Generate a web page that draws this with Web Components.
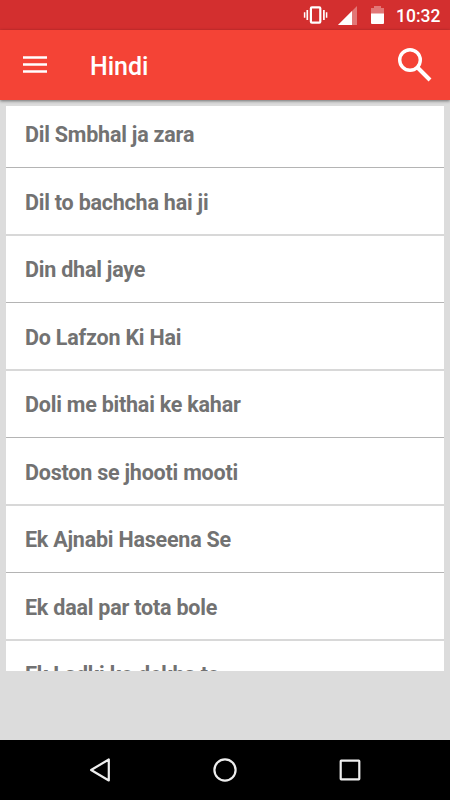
<!DOCTYPE html>
<html lang="en">
<head>
<meta charset="UTF-8">
<title>Hindi</title>
<style>
    html, body {
        margin: 0;
        height: 100%;
    }
    body {
        font-family: Roboto, "Liberation Sans", sans-serif;
        background: #dcdcdc;
        overflow: hidden;
    }
</style>
</head>
<body>
<song-app></song-app>

<script>
class StatusBar extends HTMLElement {
    constructor() {
        super();
        this.attachShadow({ mode: 'open' });
        this.shadowRoot.innerHTML = `
            <style>
                :host {
                    display: flex;
                    justify-content: flex-end;
                    align-items: center;
                    height: 30px;
                    padding-right: 9px;
                    box-sizing: border-box;
                    background: #d32f2f;
                    color: #fff;
                }
                svg { display: block; flex: none; }
                .time {
                    width: 45px;
                    margin-left: 1px;
                    font-size: 17.5px;
                    font-weight: 500;
                    line-height: 30px;
                    padding-top: 2px;
                    white-space: nowrap;
                }
            </style>
            <svg width="92" height="30" viewBox="0 0 92 30">
                <g fill="none" stroke="#fff">
                    <rect x="7.900" y="7.300" width="9.400" height="15.400" rx="1" stroke-width="2.200"/>
                    <path d="M4.300 10v10M20.900 10v10" stroke-width="1.700"/>
                    <path d="M1.600 12.200v5.600M23.600 12.200v5.600" stroke-width="1.500"/>
                </g>
                <path d="M54 6v19H35z" fill="#fff" opacity=".35"/>
                <path d="M49 11v14H35z" fill="#fff"/>
                <path d="M68 8h3V6h7v2h3v6H68z" fill="#fff" opacity=".35"/>
                <path d="M68 13.500h13V23q0 1-1 1h-11q-1 0-1-1z" fill="#fff"/>
            </svg>
            <div class="time"><slot></slot></div>
        `;
    }
}

class ToolBar extends HTMLElement {
    constructor() {
        super();
        this.attachShadow({ mode: 'open' });
        this.shadowRoot.innerHTML = `
            <style>
                :host {
                    display: flex;
                    align-items: center;
                    height: 70px;
                    padding: 0 16px 0 23px;
                    box-sizing: border-box;
                    background: #f44336;
                    color: #fff;
                    box-shadow: 0 1px 3px rgba(0, 0, 0, 0.5);
                    position: relative;
                }
                svg { display: block; flex: none; }
                .title {
                    flex: 1;
                    margin-left: 43px;
                    font-size: 25px;
                    font-weight: 500;
                    line-height: 70px;
                    padding-top: 4px;
                }
            </style>
            <svg width="24" height="20" viewBox="0 0 24 20">
                <path d="M0 2.500h24M0 9.500h24M0 16.500h24" stroke="#fff" stroke-width="2.500"/>
            </svg>
            <div class="title"><slot></slot></div>
            <svg width="36" height="36" viewBox="0 0 36 36" fill="none" stroke="#fff">
                <circle cx="12" cy="13" r="10.300" stroke-width="3.400"/>
                <path d="M19.500 20.500L32 33" stroke-width="4"/>
            </svg>
        `;
    }
}

class SongRow extends HTMLElement {
    constructor() {
        super();
        this.attachShadow({ mode: 'open' });
        this.shadowRoot.innerHTML = `
            <style>
                :host {
                    display: block;
                    height: 67px;
                    padding-left: 19px;
                    box-sizing: border-box;
                    border-bottom: 1px solid #b4b4b4;
                    color: #727272;
                    font-size: 21.5px;
                    letter-spacing: -0.22px;
                    font-weight: 700;
                    line-height: 67px;
                    white-space: nowrap;
                }
                /* every second divider falls on a half pixel */
                :host(:nth-child(even)) {
                    height: 68px;
                    border-bottom: 2px solid #d8d8d8;
                    line-height: 69px;
                }
            </style>
            <slot></slot>
        `;
    }
}

class SongList extends HTMLElement {
    constructor() {
        super();
        this.attachShadow({ mode: 'open' });
        this.shadowRoot.innerHTML = `
            <style>
                :host {
                    display: block;
                    height: 565px;
                    margin: 6px 6px 0;
                    background: #fff;
                    overflow: hidden;
                }
                .scrolled { margin-top: -5px; }
            </style>
            <div class="scrolled"><slot></slot></div>
        `;
    }
}

class NavBar extends HTMLElement {
    constructor() {
        super();
        this.attachShadow({ mode: 'open' });
        this.shadowRoot.innerHTML = `
            <style>
                :host {
                    display: flex;
                    justify-content: center;
                    align-items: center;
                    gap: 101px;
                    height: 60px;
                    background: #000;
                }
                svg {
                    display: block;
                    fill: none;
                    stroke: #eee;
                    stroke-width: 2.2;
                    stroke-linejoin: round;
                }
            </style>
            <svg width="24" height="24" viewBox="0 0 24 24"><path d="M3.100 12L20.800 1.500v21z"/></svg>
            <svg width="24" height="24" viewBox="0 0 24 24"><circle cx="12" cy="12" r="10.600"/></svg>
            <svg width="24" height="24" viewBox="0 0 24 24"><rect x="2.700" y="2.700" width="18.600" height="18.600" rx=".5"/></svg>
        `;
    }
}

class SongApp extends HTMLElement {
    constructor() {
        super();
        const songs = [
            'Dil Smbhal ja zara',
            'Dil to bachcha hai ji',
            'Din dhal jaye',
            'Do Lafzon Ki Hai',
            'Doli me bithai ke kahar',
            'Doston se jhooti mooti',
            'Ek Ajnabi Haseena Se',
            'Ek daal par tota bole',
            'Ek Ladki ko dekha to'
        ];
        this.attachShadow({ mode: 'open' });
        this.shadowRoot.innerHTML = `
            <style>
                :host {
                    display: flex;
                    flex-direction: column;
                    width: 450px;
                    height: 800px;
                }
                nav-bar { margin-top: auto; }
            </style>
            <status-bar>10:32</status-bar>
            <tool-bar>Hindi</tool-bar>
            <song-list>
                ${songs.map(song => `<song-row>${song}</song-row>`).join('')}
            </song-list>
            <nav-bar></nav-bar>
        `;
    }
}

customElements.define('status-bar', StatusBar);
customElements.define('tool-bar', ToolBar);
customElements.define('song-row', SongRow);
customElements.define('song-list', SongList);
customElements.define('nav-bar', NavBar);
customElements.define('song-app', SongApp);
</script>
</body>
</html>
